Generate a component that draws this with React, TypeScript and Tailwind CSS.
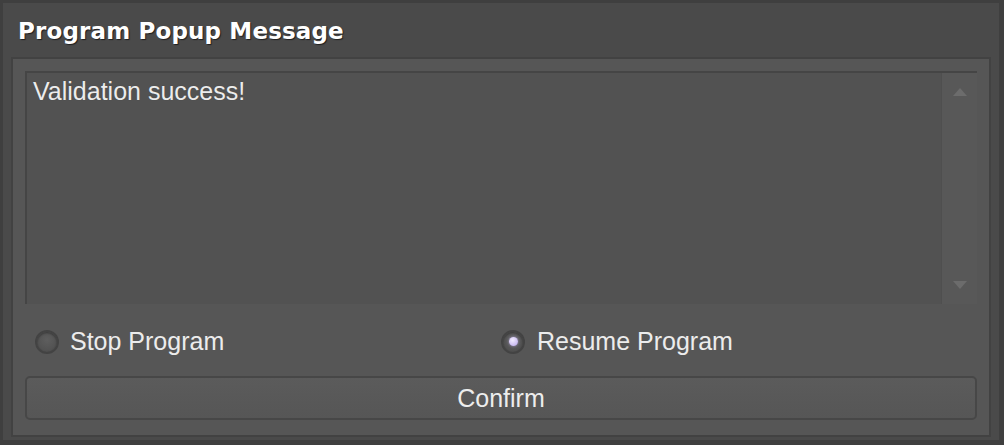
import { useState } from 'react'

function Radio({ checked }: { checked: boolean }) {
  return (
    <span className="flex h-[24px] w-[24px] items-center justify-center rounded-full border-2 border-[#434343] bg-[radial-gradient(circle_at_50%_40%,#5e5e5e,#4c4c4c)] shadow-[inset_0_1px_2px_rgba(0,0,0,0.35)]">
      {checked && (
        <span className="h-[9px] w-[9px] rounded-full bg-[radial-gradient(circle_at_40%_35%,#f2ecff,#b9a6ec)] shadow-[0_0_3px_rgba(200,185,245,0.7)]" />
      )}
    </span>
  )
}

export default function App() {
  const [mode, setMode] = useState<'stop' | 'resume'>('resume')

  return (
    <div className="flex h-[445px] w-[1004px] flex-col border-t-[3px] border-r-[5px] border-b-[5px] border-l-[3px] border-[#3f3f3f] bg-[#4a4a4a] font-['Liberation_Sans',Arial,sans-serif] text-[#ececec]">
      <div className="flex h-[54px] shrink-0 items-center pt-[3px] pl-[15px]">
        <h1 className="font-['DejaVu_Sans',sans-serif] text-[23px] leading-none font-bold tracking-[0.15px] text-white [text-shadow:1px_1px_1px_rgba(0,0,0,0.6)]">
          Program Popup Message
        </h1>
      </div>

      <div className="mx-[8px] mb-[3px] flex flex-1 flex-col border-2 border-[#424242] bg-[#565656] px-[12px] pt-[12px] pb-[12px]">
        <div className="flex h-[233px] border-t-2 border-l-2 border-[#454545] bg-[#525252]">
          <p className="flex-1 pt-[3px] pl-[6px] text-[25px] leading-[30px] [text-shadow:0_0_1px_rgba(0,0,0,0.2)]">
            Validation success!
          </p>
          <div className="flex w-[36px] flex-col items-center justify-between border-l border-[#4f4f4f] bg-[#585858] py-[15px]">
            <svg width="14" height="8" viewBox="0 0 14 8">
              <path d="M7 0 L14 8 L0 8 Z" fill="#6c6c6c" />
            </svg>
            <svg width="14" height="8" viewBox="0 0 14 8">
              <path d="M0 0 L14 0 L7 8 Z" fill="#6c6c6c" />
            </svg>
          </div>
        </div>

        <div className="grid h-[72px] grid-cols-2 items-center pt-[3px]">
          <button
            type="button"
            onClick={() => setMode('stop')}
            className="flex items-center gap-[11px] pl-[10px] text-left text-[25px]"
          >
            <Radio checked={mode === 'stop'} />
            <span>Stop Program</span>
          </button>
          <button
            type="button"
            onClick={() => setMode('resume')}
            className="flex items-center gap-[12px] pl-0 text-left text-[25px]"
          >
            <Radio checked={mode === 'resume'} />
            <span>Resume Program</span>
          </button>
        </div>

        <button
          type="button"
          className="h-[44px] rounded-[5px] border-2 border-[#474747] bg-[linear-gradient(#5b5b5b,#565656)] text-[25px] leading-none text-[#ededed]"
        >
          Confirm
        </button>
      </div>
    </div>
  )
}
